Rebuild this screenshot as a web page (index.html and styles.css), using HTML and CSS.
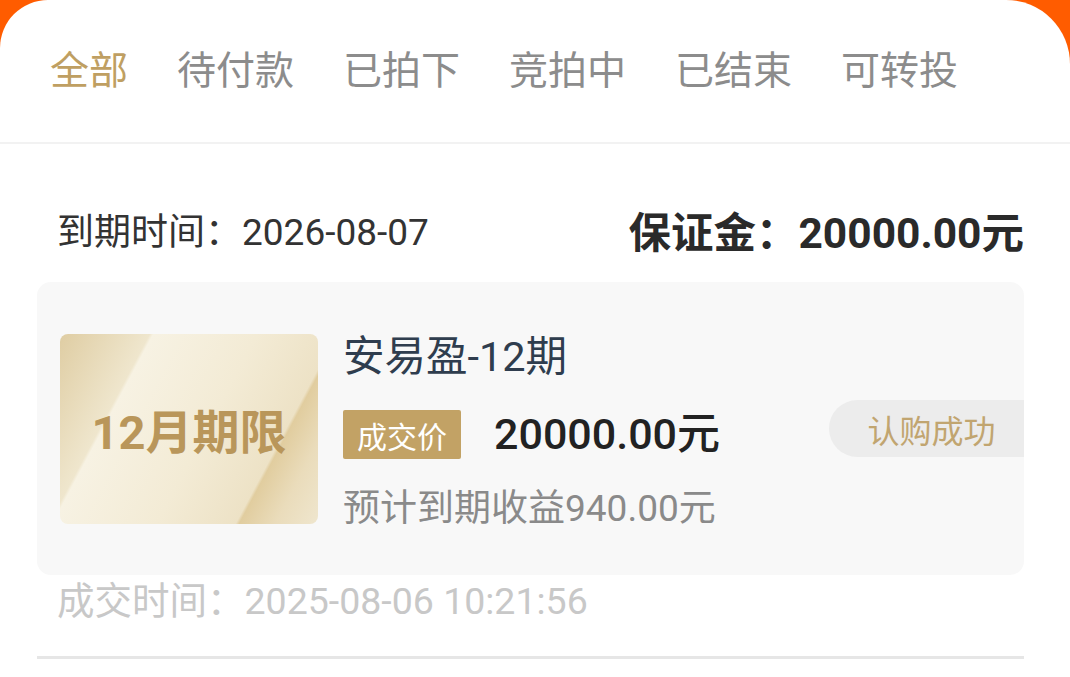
FILE: index.html
```html
<!doctype html>
<html lang="zh-CN">
  <head>
    <meta charset="UTF-8" />
    <meta name="viewport" content="width=device-width, initial-scale=1.0" />
    <title>我的竞拍</title>
    <link rel="stylesheet" href="styles.css">
  </head>
  <body>
    <div class="panel">
      <nav class="tabs">
        <span class="tab active">全部</span>
        <span class="tab">待付款</span>
        <span class="tab">已拍下</span>
        <span class="tab">竞拍中</span>
        <span class="tab">已结束</span>
        <span class="tab">可转投</span>
      </nav>

      <div class="order">
        <div class="order-head">
          <span class="due">到期时间：2026-08-07</span>
          <span class="deposit">保证金：20000.00元</span>
        </div>

        <div class="card">
          <div class="cover">12月期限</div>
          <div class="info">
            <div class="title">安易盈-12期</div>
            <div class="price-row">
              <span class="tag">成交价</span>
              <span class="price">20000.00元</span>
            </div>
            <div class="income">预计到期收益940.00元</div>
          </div>
          <span class="status">认购成功</span>
        </div>

        <div class="deal-time">成交时间：2025-08-06 10:21:56</div>
      </div>
    </div>
  </body>
</html>
```

FILE: styles.css
```css
body {
  margin: 0;
  background-color: #ff5c00;
  font-family: Roboto, "Noto Sans CJK SC", sans-serif;
  overflow: hidden;
}
.panel {
  background: #fff;
  min-height: 100vh;
  border-radius: 48px 64px 0 0;
}
.tabs {
  display: flex;
  align-items: center;
  gap: 49px;
  height: 142px;
  padding-left: 50px;
  border-bottom: 2px solid #f2f2f2;
}
.tab {
  font-size: 39px;
  color: #8c8c8c;
  line-height: 1;
}
.tab.active {
  color: #bf9f62;
}
.order {
  padding: 0 46px 0 37px;
}
.order-head {
  display: flex;
  justify-content: space-between;
  align-items: center;
  height: 138px;
  padding: 32px 0 0 20px;
  box-sizing: border-box;
}
.due {
  font-size: 37px;
  color: #333;
}
.deposit {
  font-size: 42.5px;
  font-weight: 700;
  color: #2a2a2a;
}
.card {
  display: flex;
  align-items: center;
  gap: 25px;
  height: 293px;
  padding-left: 23px;
  background: #f8f8f8;
  border-radius: 14px;
  box-sizing: border-box;
}
.cover {
  width: 258px;
  height: 190px;
  flex-shrink: 0;
  border-radius: 8px;
  display: flex;
  align-items: center;
  justify-content: center;
  font-size: 47px;
  font-weight: 700;
  color: #b9965a;
  background: linear-gradient(118deg,
    #dfcda3 0%, #efe6cd 25%, #f7f2e3 26%, #f3ebd5 55%,
    #ede2c6 77%, #e1cd9f 78%, #eadcbb 88%, #efe6ce 100%);
}
.info {
  flex: 1;
  display: flex;
  flex-direction: column;
  padding-top: 6px;
}
.title {
  font-size: 41.5px;
  color: #2f3d4e;
  line-height: 1;
}
.price-row {
  display: flex;
  align-items: center;
  gap: 33px;
  margin-top: 33px;
}
.tag {
  width: 118px;
  height: 49px;
  display: flex;
  align-items: center;
  justify-content: center;
  background: #c2a265;
  color: #fff;
  font-size: 30px;
  border-radius: 2px;
}
.price {
  font-size: 43px;
  font-weight: 500;
  color: #222;
  line-height: 1;
}
.income {
  font-size: 37px;
  color: #8a8a8a;
  margin-top: 31px;
  line-height: 1;
}
.status {
  align-self: flex-start;
  margin-top: 118px;
  width: 195px;
  height: 57px;
  display: flex;
  align-items: center;
  justify-content: center;
  padding-left: 10px;
  box-sizing: border-box;
  background: #ececec;
  color: #c1a570;
  font-size: 32px;
  border-radius: 29px 0 0 29px;
}
.deal-time {
  font-size: 37.5px;
  line-height: 52px;
  color: #c8c8c8;
  padding-left: 20px;
  height: 84px;
  border-bottom: 3px solid #e6e6e6;
  box-sizing: border-box;
}
```
